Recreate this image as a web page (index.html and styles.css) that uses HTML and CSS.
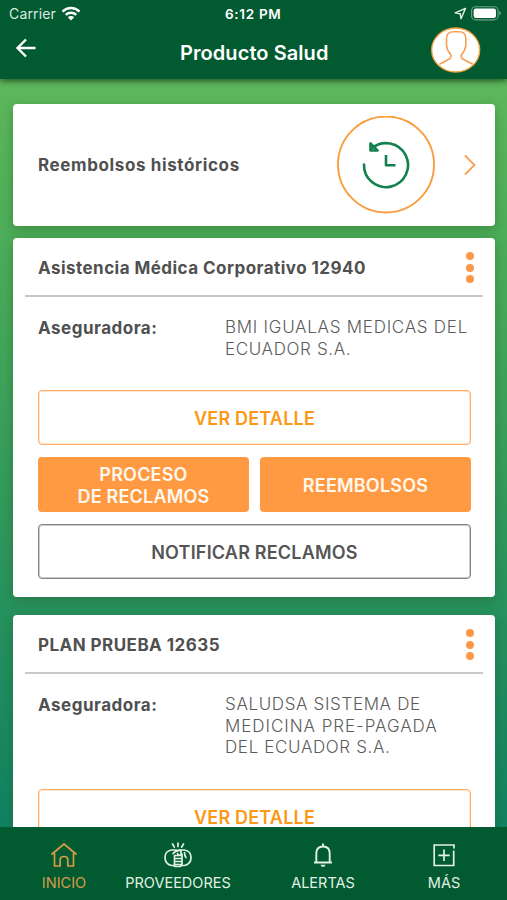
FILE: index.html
```html
<!DOCTYPE html>
<html lang="es">
<head>
<meta charset="utf-8">
<title>Producto Salud</title>
<link rel="stylesheet" href="styles.css">
</head>
<body>
<div class="app">
  <header class="header">
    <div class="status">
      <span class="carrier">Carrier</span>
      <svg class="wifi" width="20" height="16" viewBox="0 0 20 16"><g fill="none" stroke="#fff" stroke-width="2.5"><path d="M1.5 5.6C6.4 .9 13.6 .9 18.500 5.600"/><path d="M4.700 8.900C7.700 6.100 12.300 6.100 15.300 8.900"/></g><path d="M6.800 11.300C8.600 9.700 11.400 9.700 13.200 11.300L10 14.600Z" fill="#fff"/></svg>
      <span class="clock">6:12 PM</span>
      <svg class="locate" width="13" height="13" viewBox="0 0 13 13"><path d="M11.500 1.300L1.200 5.900L6.200 6.700L7 11.700Z" fill="none" stroke="#e4f2e9" stroke-width="1.400" stroke-linejoin="round"/></svg>
      <svg class="battery" width="31" height="15" viewBox="0 0 31 15"><rect x=".6" y=".7" width="26.500" height="13.200" rx="4" fill="none" stroke="#6fa387" stroke-width="1.100"/><rect x="2.600" y="2.600" width="22.400" height="9.400" rx="2.200" fill="#fff"/><path d="M28.300 5v4.600q1.500-.6 1.500-2.300t-1.500-2.300z" fill="#6fa387"/></svg>
    </div>
    <div class="toolbar">
      <svg class="back" width="22" height="22" viewBox="0 0 22 22"><path d="M20.500 11H2.500M11 2.500L2.500 11l8.500 8.500" fill="none" stroke="#fff" stroke-width="2.400"/></svg>
      <h1 class="title">Producto Salud</h1>
      <svg class="avatar" width="50" height="46" viewBox="0 0 50 46"><ellipse cx="24.700" cy="23" rx="24" ry="22" fill="#fff" stroke="#f5a040" stroke-width="1.300"/><path d="M8.500 37.300L17 32.700Q21.300 30.600 19.600 27.400Q16 23.500 15.500 18.500V11.500Q15.500 4.800 22.500 4.800H28Q34.800 4.800 34.800 11.500V18.500Q34.300 23.500 30.700 27.400Q29 30.600 33 32.700L41.800 37.300" fill="none" stroke="#f5a055" stroke-width="1.600"/></svg>
    </div>
  </header>

  <main class="content">
    <section class="card history">
      <h2 class="label history-label">Reembolsos históricos</h2>
      <svg class="history-icon" width="98" height="98" viewBox="0 0 98 98"><circle cx="49" cy="48.500" r="48" fill="none" stroke="#f99d3f" stroke-width="1.900"/><g fill="none" stroke="#12804f" stroke-width="2.600" stroke-linejoin="round"><path d="M27 48.500A22 22 0 1 0 34.500 32.600" stroke-linecap="round"/><path d="M33.500 27.500V34.500H40.500ZM49 39V49.300H58.500"/></g></svg>
      <svg class="chevron" width="12" height="22" viewBox="0 0 12 22"><path d="M1 1.500L10.500 11L1 20.500" fill="none" stroke="#f8a050" stroke-width="1.800"/></svg>
    </section>

    <section class="card plan">
      <div class="plan-head">
        <h2 class="label plan-name">Asistencia Médica Corporativo 12940</h2>
        <div class="dots"><i></i><i></i><i></i></div>
      </div>
      <div class="insurer">
        <span class="label insurer-label">Aseguradora:</span>
        <span class="value"><span class="medium">BMI IGUALAS MEDICAS DEL</span><br>ECUADOR S.A.</span>
      </div>
      <div class="actions">
        <button class="btn outline">VER DETALLE</button>
        <div class="pair">
          <button class="btn solid">PROCESO<br>DE RECLAMOS</button>
          <button class="btn solid">REEMBOLSOS</button>
        </div>
        <button class="btn neutral">NOTIFICAR RECLAMOS</button>
      </div>
    </section>

    <section class="card plan">
      <div class="plan-head">
        <h2 class="label plan-name">PLAN PRUEBA 12635</h2>
        <div class="dots"><i></i><i></i><i></i></div>
      </div>
      <div class="insurer tall">
        <span class="label insurer-label">Aseguradora:</span>
        <span class="value">SALUDSA SISTEMA DE<br><span class="wide">MEDICINA PRE-PAGADA</span><br>DEL ECUADOR S.A.</span>
      </div>
      <div class="actions">
        <button class="btn outline">VER DETALLE</button>
      </div>
    </section>
  </main>

  <nav class="tabs">
    <a class="tab active">
      <svg width="28" height="26" viewBox="0 0 28 26"><path d="M1.500 12.500L14 2L26.500 12.500M4.500 11V24H10.200V17.500Q10.200 14.500 14 14.500T17.800 17.500V24H23.500V11" fill="none" stroke="currentColor" stroke-width="1.700" stroke-linejoin="round"/></svg>
      <span>INICIO</span>
    </a>
    <a class="tab">
      <svg width="28" height="26" viewBox="0 0 28 26"><g fill="none" stroke="currentColor" stroke-width="1.700" stroke-linecap="round" stroke-linejoin="round"><path d="M14 1v3.500M8.500 2l1.800 3.200M19.500 2l-1.800 3.200"/><path d="M12.500 8H7.500Q1 9 1 15.500T7.500 23.500H10M15 8H20.500Q27 9 27 15.500T20.500 23.500H17"/><path d="M9 11.500Q12 8 17 8.500V13Q14.500 14 13.500 11.500M11 13.500H17.500M11 16.500H17.500M11 19.500H17.500M11 22.500H17M10.500 13.500V24.500H16.500L18 22V12M20.500 10.500Q20.500 13.500 22 15.500"/></g></svg>
      <span>PROVEEDORES</span>
    </a>
    <a class="tab">
      <svg width="28" height="26" viewBox="0 0 28 26"><path d="M5 20.500H23M7.300 20V11.500Q7.300 4.500 14 4.500T20.700 11.500V20M14 1.500V4.500" fill="none" stroke="currentColor" stroke-width="1.900"/><path d="M11.500 22.700h5q-.8 2.300-2.500 2.300t-2.500-2.300z" fill="currentColor"/></svg>
      <span>ALERTAS</span>
    </a>
    <a class="tab">
      <svg width="28" height="26" viewBox="0 0 28 26"><path d="M24 6.500V3H4.200V23.500H23.700V8.500M14 7.500V19M8.300 13.300H19.700" fill="none" stroke="currentColor" stroke-width="1.700"/></svg>
      <span>MÁS</span>
    </a>
  </nav>
</div>
</body>
</html>
```
FILE: styles.css
```css
* { box-sizing: border-box; }

body {
  margin: 0;
  font-family: Inter, "Liberation Sans", sans-serif;
}

.app {
  display: flex;
  flex-direction: column;
  width: 507px;
  height: 900px;
  overflow: hidden;
  background: linear-gradient(#5eb85c 80px, #4bad5a 250px, #329a5c 500px, #108263 827px);
}

.header {
  position: relative;
  z-index: 1;
  flex: none;
  height: 79px;
  background: #015a30;
  color: #fff;
  box-shadow: 0 2px 6px rgba(20, 50, 20, .75);
}

.status {
  display: grid;
  grid-template-columns: 52px 164px 229px 17px 31px;
  align-items: center;
  height: 27px;
  padding-left: 9px;
}

.carrier { font-size: 14px; letter-spacing: .15px; color: #dcebe2; }
.clock { font-size: 13.5px; font-weight: 600; letter-spacing: .7px; white-space: nowrap; }

.toolbar {
  display: grid;
  grid-template-columns: 165px 251px 50px;
  height: 46px;
  padding-left: 15px;
}

.back { margin-top: 10px; }

.title {
  margin: 14px 0 0;
  font-size: 20px;
  line-height: 24px;
  font-weight: 600;
  letter-spacing: .07px;
}

.content {
  flex: 1;
  min-height: 0;
  overflow: hidden;
  padding: 25px 12px 0 13px;
}

.card {
  background: #fff;
  border-radius: 4px;
  box-shadow: 0 3px 12px rgba(40, 80, 25, .4);
}

.label {
  margin: 0;
  font-size: 17px;
  line-height: 22px;
  font-weight: 700;
  letter-spacing: .5px;
  color: #505050;
  white-space: nowrap;
}

.plan-name { letter-spacing: .46px; }
.history-label { letter-spacing: .62px; }

.history {
  display: grid;
  grid-template-columns: 299px 127px 12px;
  align-items: center;
  height: 122px;
  margin-bottom: 12px;
  padding-left: 25px;
}

.plan { height: 359px; margin-bottom: 18px; }

.plan-head {
  display: flex;
  justify-content: space-between;
  align-items: center;
  height: 59px;
  margin: 0 12px;
  padding: 2px 9px 0 13px;
  border-bottom: 2px solid #c8c8c8;
}

.dots { display: flex; flex-direction: column; gap: 3.500px; }
.dots i { width: 8px; height: 8px; border-radius: 50%; background: #fb9849; }

.insurer {
  display: grid;
  grid-template-columns: 187px 1fr;
  height: 93px;
  padding: 20px 0 0 25px;
}

.insurer.tall { height: 115px; }

.value {
  font-size: 17px;
  line-height: 21.500px;
  font-weight: 300;
  letter-spacing: .64px;
  color: #5c5c5c;
  white-space: nowrap;
}

.medium { letter-spacing: .74px; }
.wide { letter-spacing: .95px; }

.actions {
  display: flex;
  flex-direction: column;
  gap: 12px;
  padding: 0 24px 0 25px;
}

.btn {
  height: 55px;
  padding: 2px 0 0;
  border: 0;
  border-radius: 4px;
  font: 600 18px/21.500px Inter, "Liberation Sans", sans-serif;
  letter-spacing: .2px;
}

.outline { border: 1px solid #ffac68; box-shadow: inset 0 0 0 1px #ffe6d0; background: #fff; color: #fb9917; }
.neutral { border: 1px solid #858585; box-shadow: inset 0 0 0 1px #c9c9c9; background: #fff; color: #555; }
.solid { background: #ff9a43; color: #fff8ee; }
.pair { display: grid; grid-template-columns: 1fr 1fr; gap: 11px; }

.tabs {
  position: relative;
  flex: none;
  display: grid;
  grid-template-columns: 128px 100px 190px 52px;
  height: 73px;
  padding-top: 15px;
  background: #015a30;
  color: #e2f1e6;
}

.tab {
  display: flex;
  flex-direction: column;
  align-items: center;
  gap: 4px;
  font-size: 14.500px;
  line-height: 22px;
}

.active { color: #d79c48; }
```
